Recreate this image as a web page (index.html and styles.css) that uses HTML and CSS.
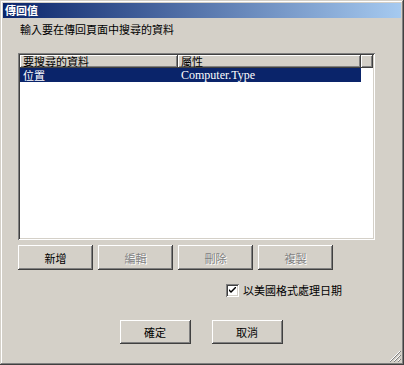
FILE: index.html
```html
<!DOCTYPE html>
<html lang="zh-Hant">
<head>
    <meta charset="UTF-8">
    <title>傳回值</title>
    <link rel="stylesheet" href="styles.css">
</head>
<body>
    <div class="window">
        <div class="titlebar">傳回值</div>
        <div class="body">
            <p class="prompt">輸入要在傳回頁面中搜尋的資料</p>
            <div class="list">
                <div class="list-head">
                    <div class="col c1">要搜尋的資料</div>
                    <div class="col c2">屬性</div>
                    <div class="col c3"></div>
                </div>
                <div class="row selected">
                    <div class="cell c1">位置</div>
                    <div class="cell c2 latin">Computer.Type</div>
                </div>
            </div>
            <div class="btn-row">
                <button class="btn">新增</button>
                <button class="btn" disabled>編輯</button>
                <button class="btn" disabled>刪除</button>
                <button class="btn" disabled>複製</button>
            </div>
            <label class="check-row">
                <span class="check">
                    <svg width="7" height="7" viewBox="0 0 7 7"><path d="M0 2 L0 4 L2 6 L7 1 L7 -1 L2 4 Z" fill="#000"/></svg>
                </span>
                以美國格式處理日期
            </label>
            <div class="dlg-row">
                <button class="btn dlg">確定</button>
                <button class="btn dlg">取消</button>
            </div>
        </div>
        <svg class="grip" width="12" height="12" viewBox="0 0 12 12">
            <path d="M11 1 L1 11 M11 5 L5 11 M11 9 L9 11" stroke="#fff" stroke-width="1"/>
            <path d="M12 1 L1 12 M12 5 L5 12 M12 9 L9 12" stroke="#808080" stroke-width="1"/>
        </svg>
    </div>
</body>
</html>
```

FILE: styles.css
```css
*
{
    box-sizing:border-box;
}
body
{
    margin:0;
    background:#d4d0c8;
    font-family:"Noto Sans CJK TC","Liberation Sans",sans-serif;
    font-size:11px;
    color:#000;
}
.window
{
    position:relative;
    width:404px;
    height:365px;
    padding:3px;
    background:#d4d0c8;
    box-shadow:inset -1px -1px #404040,inset 1px 1px #d4d0c8,inset -2px -2px #808080,inset 2px 2px #fff;
}
.titlebar
{
    height:15px;
    line-height:15px;
    padding-left:2px;
    color:#fff;
    font-weight:bold;
    font-size:11px;
    background:linear-gradient(to right,#0a246a,#a6caf0);
}
.body
{
    padding:0 15px;
}
.prompt
{
    margin:5px 0 0 2px;
    line-height:13px;
}
.list
{
    margin-top:17px;
    width:357px;
    height:187px;
    padding:2px;
    background:#fff;
    box-shadow:inset 1px 1px #808080,inset -1px -1px #fff,inset 2px 2px #404040,inset -2px -2px #d4d0c8;
}
.list-head
{
    display:flex;
    height:13px;
}
.col
{
    height:13px;
    line-height:13px;
    padding-left:3px;
    background:#d4d0c8;
    box-shadow:inset -1px -1px #404040,inset 1px 1px #fff,inset -2px -2px #808080;
}
.c1
{
    width:158px;
}
.c2
{
    width:183px;
}
.c3
{
    flex:1;
}
.row
{
    display:flex;
    height:14px;
    line-height:14px;
}
.row.selected .cell
{
    background:#0a246a;
    color:#fff;
}
.cell
{
    padding-left:3px;
}
.latin
{
    font-family:"Liberation Serif","Noto Sans CJK TC",serif;
    font-size:12px;
}
.btn-row
{
    display:flex;
    gap:5px;
    margin-top:5px;
}
.btn
{
    width:75px;
    height:25px;
    padding:0;
    border:none;
    background:#d4d0c8;
    font:inherit;
    color:#000;
    box-shadow:inset -1px -1px #404040,inset 1px 1px #fff,inset -2px -2px #808080,inset 2px 2px #d4d0c8;
}
.btn:disabled
{
    color:#808080;
    text-shadow:1px 1px #fff;
}
.check-row
{
    display:flex;
    align-items:center;
    gap:4px;
    margin:14px 0 0 208px;
    height:13px;
    line-height:13px;
}
.check
{
    display:flex;
    align-items:center;
    justify-content:center;
    width:13px;
    height:13px;
    background:#fff;
    box-shadow:inset 1px 1px #808080,inset -1px -1px #fff,inset 2px 2px #404040,inset -2px -2px #d4d0c8;
}
.dlg-row
{
    display:flex;
    justify-content:center;
    gap:21px;
    margin-top:23px;
    padding-right:2px;
}
.dlg
{
    width:71px;
    height:24px;
}
.grip
{
    position:absolute;
    right:3px;
    bottom:3px;
}
```
